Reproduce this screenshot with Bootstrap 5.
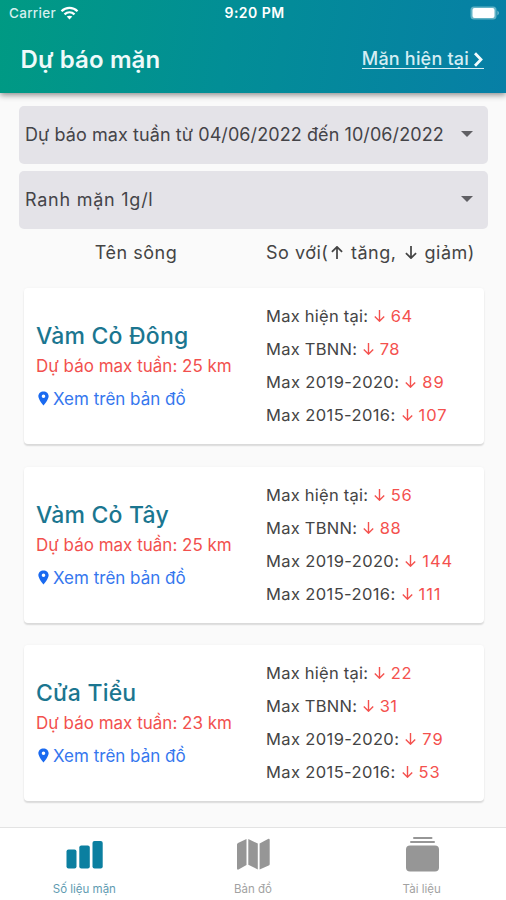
<!DOCTYPE html>
<html lang="vi">
<head>
<meta charset="utf-8">
<meta name="viewport" content="width=device-width, initial-scale=1">
<title>Dự báo mặn</title>
<link href="https://cdn.jsdelivr.net/npm/bootstrap@5.3.0/dist/css/bootstrap.min.css" rel="stylesheet">
<style>
body{font-family:Inter,"Noto Sans",sans-serif;background:#fafafa;color:#444;width:506px;height:900px;overflow:hidden}
.app-head{height:93px;background:linear-gradient(100deg,#009a83 0%,#028e96 45%,#077fa6 100%);box-shadow:0 2px 6px rgba(0,0,0,.45);color:#effafa;z-index:1}
.status{height:26px;padding:0 6px 0 9px;font-size:13.5px;line-height:26px}
.status > div{flex:1 1 0}
.status .carrier{letter-spacing:.3px;font-weight:500;color:#d5efee}
.status .clock{font-weight:600;font-size:14px;letter-spacing:.45px;color:#fff}
.title-row{height:67px;padding:0 22px 0 20.5px}
.title-row h1{font-size:24px;font-weight:600;line-height:30px;letter-spacing:.12px}
.now-link{color:#d5edf3;font-size:18px;font-weight:500;line-height:18px;letter-spacing:.2px;border-bottom:1.5px solid #d5edf3}
.picker{height:58px;background:#e4e3e8;border-radius:5px;padding:0 15px 2px 6px;font-size:18px;color:#444448}
.picker-list{padding:13px 18px 0 19px;gap:7px}
.p-one{letter-spacing:.085px}
.p-two{letter-spacing:.75px}
.heads{height:48px;font-size:18px;letter-spacing:.5px;line-height:48px}
.heads .h-left{width:234px;padding-left:38px}
.heads .arw{width:12px;height:13px;margin:-4px 2px 0 3px;stroke-width:1.6}
.river-list{padding:11px 22px 0 24px;gap:22.7px}
.river{height:156px;border-radius:4px;background:#fff;box-shadow:0 2px 1.5px rgba(0,0,0,.12),0 0 3px rgba(0,0,0,.04);padding-left:12px}
.river-info{width:230px;padding-top:32px}
.river-info h2{font-size:23px;line-height:32px;font-weight:450;letter-spacing:.2px;color:#1b7690}
.forecast{font-size:17px;line-height:29px;color:#f2504e}
.map-link{font-size:17px;line-height:36px;color:#3577ee}
.map-link svg{margin:0 3px 1px 1px;color:#1a6af0}
.stats{padding-top:12px;font-size:16.5px;line-height:33px;letter-spacing:.25px}
.stats .yr{letter-spacing:.38px}
.stats b{font-weight:400;color:#f4514e;letter-spacing:.5px}
.stats .yr b{letter-spacing:.9px}
.arw{width:11px;height:12px;fill:none;stroke:currentColor;stroke-width:1.4;overflow:visible}
.stats .arw{margin:-3px .5px 0 1px}
.tabs{height:73px;background:#fff;border-top:1px solid #e3e3e3;font-size:11.5px;color:#a2a2a2}
.tabs a{flex:1 1 0;color:inherit;padding-top:8px}
.tabs a.on{color:#5f9bb1}
.tabs svg{width:40px;height:38px}
.tabs span{line-height:16px;margin-top:7px}
</style>
<script src="https://cdn.jsdelivr.net/npm/bootstrap@5.3.0/dist/js/bootstrap.bundle.min.js"></script>
</head>
<body class="d-flex flex-column">
<svg class="d-none">
<symbol id="pin" viewBox="0 0 12 16"><path fill-rule="evenodd" d="M6 .5C2.900.5.5 2.700.5 5.600c0 3.600 5.500 9.900 5.500 9.900s5.500-6.300 5.500-9.900C11.500 2.700 9.100.5 6 .5zM6 3.700a1.900 1.900 0 1 1 0 3.800 1.900 1.900 0 0 1 0-3.800z" fill="currentColor"/></symbol>
<symbol id="down" viewBox="0 0 11 12"><path d="M5.500 0v11M.8 6.500l4.700 4.700 4.700-4.700"/></symbol>
<symbol id="up" viewBox="0 0 11 12"><path d="M5.500 12V1M.8 5.500L5.500.8l4.700 4.700"/></symbol>
</svg>
<header class="app-head position-relative flex-shrink-0">
  <div class="status d-flex">
    <div class="d-flex align-items-center"><span class="carrier">Carrier</span>
      <svg class="ms-1" width="19" height="14" viewBox="0 0 18 14" fill="none" stroke="#fff" stroke-width="2.300"><path d="M1 5.200C5.500.8 12.500.8 17 5.200M4 8.300c2.900-2.700 7.100-2.700 10 0"/><path d="M9 13.500l-2.800-2.900c1.600-1.300 4-1.300 5.600 0z" fill="#fff" stroke="none"/></svg>
    </div>
    <div class="clock text-center">9:20 PM</div>
    <div class="d-flex justify-content-end align-items-center"><svg width="30" height="14" viewBox="0 0 30 14"><rect x=".5" y=".5" width="26" height="13" rx="3.500" fill="#63b3c6"/><rect x="2.500" y="2" width="22" height="10" rx="2" fill="#fff"/><path d="M27.500 4.500q2.500 2.500 0 5z" fill="#8fc8d8"/></svg></div>
  </div>
  <div class="title-row d-flex justify-content-between align-items-center">
    <h1 class="m-0">Dự báo mặn</h1>
    <a href="#" class="now-link text-decoration-none d-flex align-items-center">Mặn hiện tại <svg class="ms-1" width="11" height="15" viewBox="0 0 11 15" fill="none" stroke="#f2fbfd" stroke-width="2.800"><path d="M2 1.200l6 6.300-6 6.300"/></svg></a>
  </div>
</header>
<main class="flex-grow-1">
  <div class="picker-list d-flex flex-column">
    <div class="picker d-flex justify-content-between align-items-center"><span class="p-one">Dự báo max tuần từ 04/06/2022 đến 10/06/2022</span><svg width="12" height="6" viewBox="0 0 12 6"><path d="M0 0h12L6 6z" fill="#606064"/></svg></div>
    <div class="picker d-flex justify-content-between align-items-center"><span class="p-two">Ranh mặn 1g/l</span><svg width="12" height="6" viewBox="0 0 12 6"><path d="M0 0h12L6 6z" fill="#606064"/></svg></div>
  </div>
  <div class="heads d-flex"><div class="h-left text-center">Tên sông</div><div class="ps-4 ms-2">So với(<svg class="arw"><use href="#up"/></svg> tăng, <svg class="arw"><use href="#down"/></svg> giảm)</div></div>
  <div class="river-list d-flex flex-column">
    <section class="river d-flex">
      <div class="river-info"><h2 class="m-0">Vàm Cỏ Đông</h2><div class="forecast">Dự báo max tuần: 25 km</div><a href="#" class="map-link text-decoration-none d-flex align-items-center"><svg width="13" height="15"><use href="#pin"/></svg>Xem trên bản đồ</a></div>
      <div class="stats"><div>Max hiện tại: <b><svg class="arw"><use href="#down"/></svg> 64</b></div><div>Max TBNN: <b><svg class="arw"><use href="#down"/></svg> 78</b></div><div class="yr">Max 2019-2020: <b><svg class="arw"><use href="#down"/></svg> 89</b></div><div class="yr">Max 2015-2016: <b><svg class="arw"><use href="#down"/></svg> 107</b></div></div>
    </section>
    <section class="river d-flex">
      <div class="river-info"><h2 class="m-0">Vàm Cỏ Tây</h2><div class="forecast">Dự báo max tuần: 25 km</div><a href="#" class="map-link text-decoration-none d-flex align-items-center"><svg width="13" height="15"><use href="#pin"/></svg>Xem trên bản đồ</a></div>
      <div class="stats"><div>Max hiện tại: <b><svg class="arw"><use href="#down"/></svg> 56</b></div><div>Max TBNN: <b><svg class="arw"><use href="#down"/></svg> 88</b></div><div class="yr">Max 2019-2020: <b><svg class="arw"><use href="#down"/></svg> 144</b></div><div class="yr">Max 2015-2016: <b><svg class="arw"><use href="#down"/></svg> 111</b></div></div>
    </section>
    <section class="river d-flex">
      <div class="river-info"><h2 class="m-0">Cửa Tiểu</h2><div class="forecast">Dự báo max tuần: 23 km</div><a href="#" class="map-link text-decoration-none d-flex align-items-center"><svg width="13" height="15"><use href="#pin"/></svg>Xem trên bản đồ</a></div>
      <div class="stats"><div>Max hiện tại: <b><svg class="arw"><use href="#down"/></svg> 22</b></div><div>Max TBNN: <b><svg class="arw"><use href="#down"/></svg> 31</b></div><div class="yr">Max 2019-2020: <b><svg class="arw"><use href="#down"/></svg> 79</b></div><div class="yr">Max 2015-2016: <b><svg class="arw"><use href="#down"/></svg> 53</b></div></div>
    </section>
  </div>
</main>
<nav class="tabs d-flex flex-shrink-0">
  <a href="#" class="on text-decoration-none d-flex flex-column align-items-center"><svg viewBox="0 0 40 38" fill="#0b7fa0"><rect x="2.500" y="13.500" width="10" height="19" rx="2"/><rect x="15.300" y="9.500" width="10.500" height="23" rx="2"/><rect x="28.500" y="5" width="10.200" height="27.500" rx="2"/></svg><span>Số liệu mặn</span></a>
  <a href="#" class="text-decoration-none d-flex flex-column align-items-center"><svg viewBox="0 0 40 38" fill="#969696"><path d="M4 8.500q0-1 1-1.600L13.500 3v26L5.500 33.500Q4 34 4 32.500zM15.300 3l9.500 4.500V33.500l-9.500-4.800zM26.600 7.500L35 3q1.700-.6 1.700 1v24q0 1-1 1.600l-9.100 4z"/></svg><span>Bản đồ</span></a>
  <a href="#" class="text-decoration-none d-flex flex-column align-items-center"><svg viewBox="0 0 40 38" fill="#969696"><rect x="11" y="1" width="19.500" height="2" rx="1"/><rect x="8" y="5" width="25" height="2" rx="1"/><rect x="4" y="9.500" width="33" height="26" rx="4"/></svg><span>Tài liệu</span></a>
</nav>
</body>
</html>
